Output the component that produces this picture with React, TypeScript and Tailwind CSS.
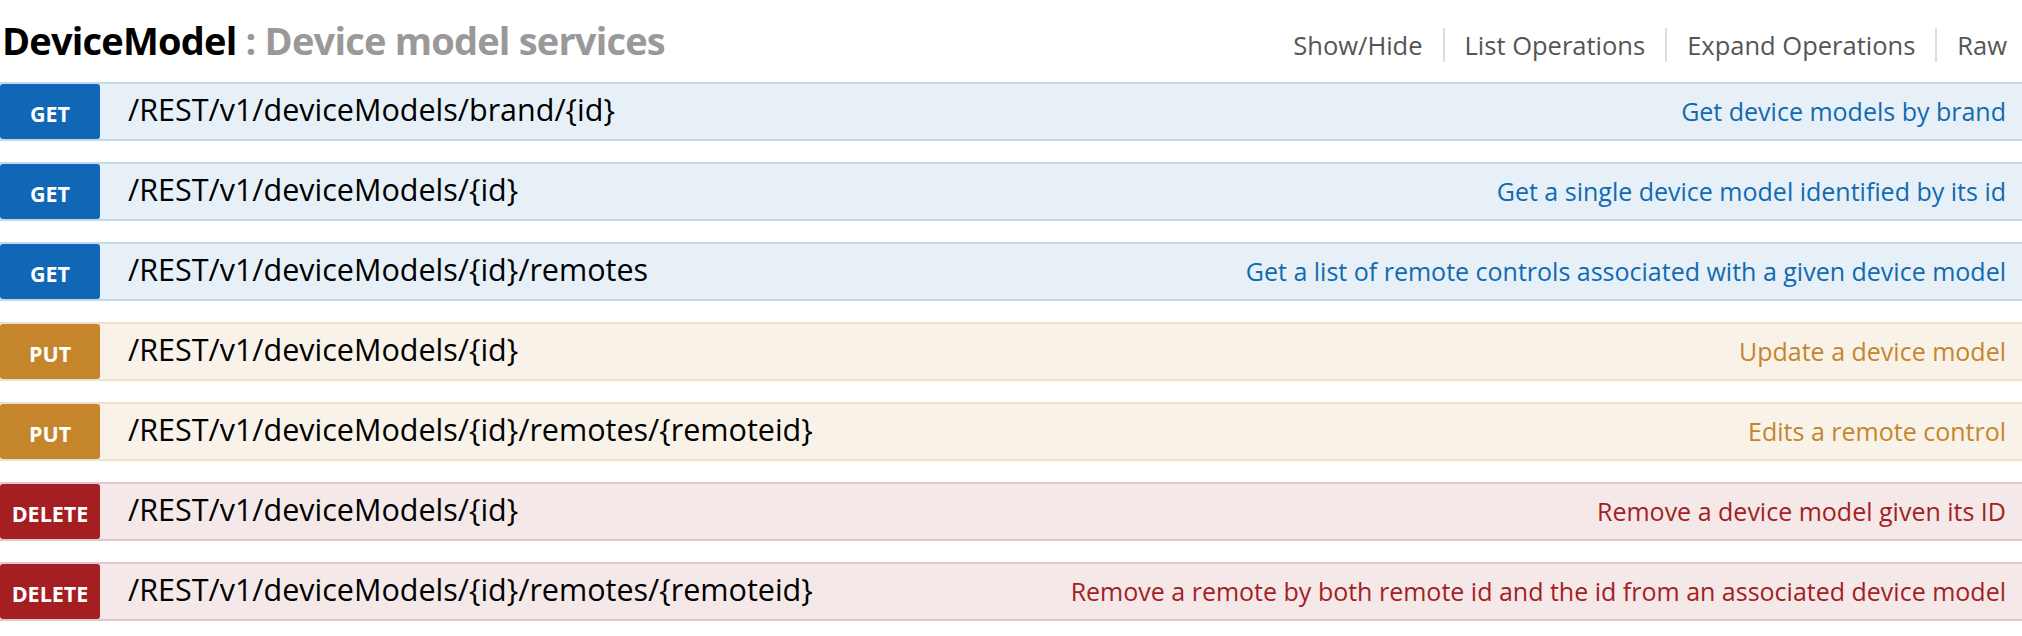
import React from "react";

type Method = "GET" | "PUT" | "DELETE";

const operations: { method: Method; path: string; summary: string }[] = [
  { method: "GET", path: "/REST/v1/deviceModels/brand/{id}", summary: "Get device models by brand" },
  { method: "GET", path: "/REST/v1/deviceModels/{id}", summary: "Get a single device model identified by its id" },
  {
    method: "GET",
    path: "/REST/v1/deviceModels/{id}/remotes",
    summary: "Get a list of remote controls associated with a given device model",
  },
  { method: "PUT", path: "/REST/v1/deviceModels/{id}", summary: "Update a device model" },
  { method: "PUT", path: "/REST/v1/deviceModels/{id}/remotes/{remoteid}", summary: "Edits a remote control" },
  { method: "DELETE", path: "/REST/v1/deviceModels/{id}", summary: "Remove a device model given its ID" },
  {
    method: "DELETE",
    path: "/REST/v1/deviceModels/{id}/remotes/{remoteid}",
    summary: "Remove a remote by both remote id and the id from an associated device model",
  },
];

// colores por método
const styles: Record<Method, { row: string; badge: string; text: string }> = {
  GET: { row: "bg-[#e7f0f7] border-[#c3d9ec]", badge: "bg-[#0f67b5]", text: "text-[#0f6ab4]" },
  PUT: { row: "bg-[#f9f2e9] border-[#f0e0ca]", badge: "bg-[#c5862b]", text: "text-[#c5862b]" },
  DELETE: { row: "bg-[#f5e8e8] border-[#e8c6c7]", badge: "bg-[#a41e22]", text: "text-[#a41e22]" },
};

const links = ["Show/Hide", "List Operations", "Expand Operations", "Raw"];

const App = () => {
  return (
    <div className="w-[2022px] h-[636px] bg-white overflow-hidden font-['Open_Sans',sans-serif]">
      {/* Encabezado */}
      <div className="h-[82px] flex items-baseline justify-between pt-[16px] pr-[15px]">
        <h2 className="text-[38px] leading-[48px] font-bold tracking-[-0.8px] pl-[2px]">
          <span className="text-black">DeviceModel</span>
          <span className="text-[#999999]"> : Device model services</span>
        </h2>
        <ul className="flex items-center text-[25.5px] leading-[34px] text-[#555555]">
          {links.map((link, index) => (
            <li
              key={link}
              className={`px-[20px] last:pr-0 ${index > 0 ? "border-l-2 border-[#dddddd]" : ""}`}
            >
              {link}
            </li>
          ))}
        </ul>
      </div>

      {/* Operaciones */}
      <ul className="flex flex-col gap-[21px]">
        {operations.map((op, index) => {
          const s = styles[op.method];
          return (
            <li key={index} className={`h-[59px] border-y-2 flex items-center ${s.row}`}>
              <span
                className={`w-[100px] h-full rounded-[3px] flex items-center justify-center pt-[4px] text-white font-bold text-[21.5px] leading-none ${s.badge}`}
              >
                {op.method}
              </span>
              <span className="ml-[28px] mb-[5px] text-[30.5px] leading-none text-black">{op.path}</span>
              <span className={`ml-auto pr-[16px] text-[25px] leading-none ${s.text}`}>{op.summary}</span>
            </li>
          );
        })}
      </ul>
    </div>
  );
};

export default App;
